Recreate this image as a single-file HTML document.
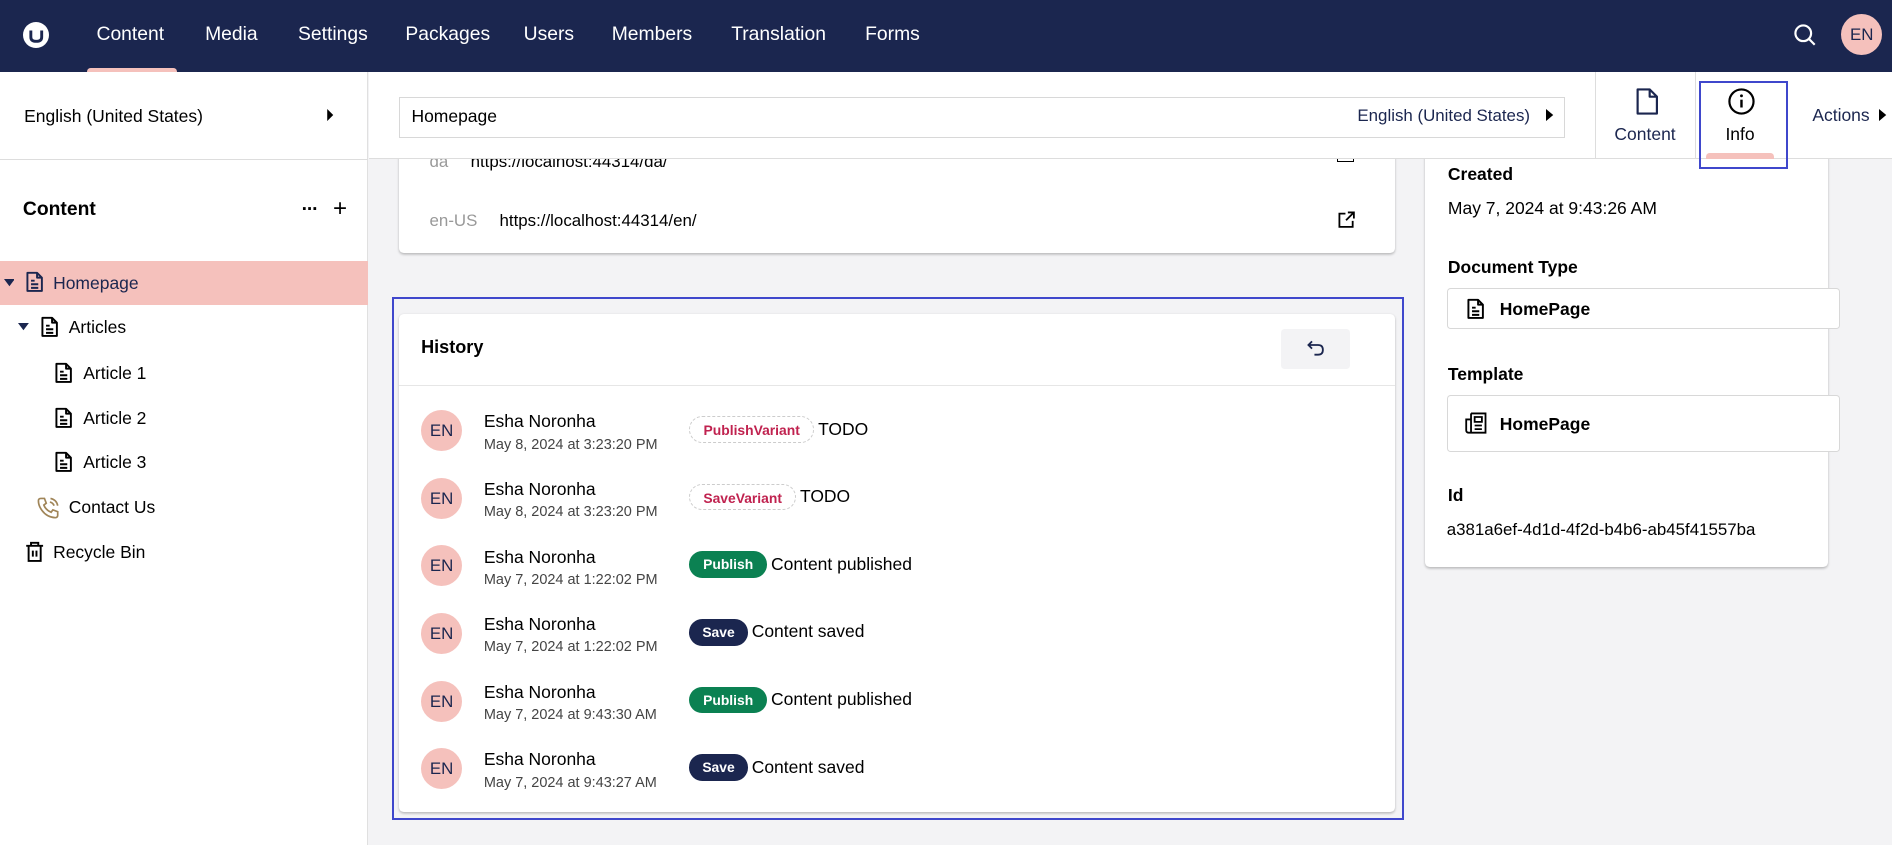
<!DOCTYPE html>
<html><head><meta charset="utf-8">
<style>
*{box-sizing:border-box;margin:0;padding:0}
html,body{width:1892px;height:845px;overflow:hidden;background:#f3f3f5}
body{font-family:"Liberation Sans",sans-serif;color:#1b264f}
#w{zoom:1.2066;width:1568px;height:701px;position:relative;background:#f3f3f5;overflow:hidden}
.a{position:absolute}
.hdr{left:0;top:0;width:1568px;height:60px;background:#1b264f}
.nav{top:20px;color:#fff;font-size:16px}
.t{white-space:nowrap}
.bold{font-weight:bold}
.card{background:#fff;border-radius:4px;box-shadow:0 1px 2px rgba(0,0,0,.25)}
.tree{font-size:14.5px;color:#1b264f}
.av{width:34px;height:34px;border-radius:50%;background:#f5c1bc;color:#1b264f;font-size:14px;text-align:center;line-height:34px}
.nm{font-size:14.5px;color:#000}
.dt{font-size:12px;color:#444}
.bdg{height:22px;border-radius:11px;font-size:11.5px;font-weight:bold;line-height:22px;text-align:center;color:#fff}
.msg{font-size:14.5px;color:#000}
</style></head><body><div id="w">
<div class="a hdr"></div>
<div class="a" style="left:19px;top:18px;width:22px;height:22px;border-radius:50%;background:#fff"></div>
<svg class="a" style="left:19px;top:18px" width="22" height="22" viewBox="0 0 22 22"><path d="M6.5 7 V12.5 Q6.5 16 11 16 Q15.5 16 15.5 12.5 V7" fill="none" stroke="#1b264f" stroke-width="2.4"/></svg>
<div class="a nav t" style="left:80px">Content</div>
<div class="a nav t" style="left:170px">Media</div>
<div class="a nav t" style="left:247px">Settings</div>
<div class="a nav t" style="left:336px">Packages</div>
<div class="a nav t" style="left:434px">Users</div>
<div class="a nav t" style="left:507px">Members</div>
<div class="a nav t" style="left:606px">Translation</div>
<div class="a nav t" style="left:717px">Forms</div>
<div class="a" style="left:72px;top:56px;width:75px;height:4px;background:#f5c1bc;border-radius:3px 3px 0 0"></div>
<svg class="a" style="left:1486px;top:19px" width="20" height="20" viewBox="0 0 20 20"><circle cx="8.5" cy="8.5" r="6.5" fill="none" stroke="#fff" stroke-width="1.8"/><path d="M13.5 13.5 L18 18" stroke="#fff" stroke-width="1.8"/></svg>
<div class="a av" style="left:1526px;top:12px;font-size:14px">EN</div>

<!-- sidebar -->
<div class="a" style="left:0;top:60px;width:305px;height:641px;background:#fff;border-right:1px solid #e0e0e0"></div>
<div class="a" style="left:0;top:132px;width:305px;height:1px;background:#ddd"></div>
<div class="a t" style="left:20px;top:88px;font-size:14.5px;color:#000">English (United States)</div>
<svg class="a" style="left:270px;top:90px" width="8" height="10"><path d="M1 0 L6 5 L1 10Z" fill="#000"/></svg>
<div class="a t bold" style="left:19px;top:165px;font-size:16px;color:#000">Content</div>
<div class="a t bold" style="left:250px;top:165px;font-size:16px;color:#000;letter-spacing:-1px">···</div>
<div class="a t" style="left:276px;top:162px;font-size:20px;color:#000">+</div>
<div class="a" style="left:0;top:216px;width:305px;height:37px;background:#f5c1bc"></div>
<svg width="0" height="0" style="position:absolute"><defs><symbol id="doc" viewBox="0 0 16 18"><path d="M2 1.5 H10 L14 5.5 V16.5 H2 Z M10 1.5 V5.5 H14 M5 8 H8 M5 11 H11 M5 14 H11" fill="none" stroke="currentColor" stroke-width="1.6" stroke-linejoin="round"/></symbol></defs></svg>
<svg class="a" style="left:3px;top:231px" width="9" height="7"><path d="M0 0 H9 L4.5 6Z" fill="#1b264f"/></svg>
<svg class="a" style="left:21px;top:225px;color:#1b264f" width="16" height="18"><use href="#doc"/></svg>
<div class="a t tree" style="left:44px;top:226px">Homepage</div>
<svg class="a" style="left:15px;top:268px" width="9" height="7"><path d="M0 0 H9 L4.5 6Z" fill="#1b264f"/></svg>
<svg class="a" style="left:33px;top:262px;color:#000" width="16" height="18"><use href="#doc"/></svg>
<div class="a t tree" style="left:57px;top:263px;color:#000">Articles</div>
<svg class="a" style="left:45px;top:300px;color:#000" width="16" height="18"><use href="#doc"/></svg>
<div class="a t tree" style="left:69px;top:301px;color:#000">Article 1</div>
<svg class="a" style="left:45px;top:337px;color:#000" width="16" height="18"><use href="#doc"/></svg>
<div class="a t tree" style="left:69px;top:338px;color:#000">Article 2</div>
<svg class="a" style="left:45px;top:374px;color:#000" width="16" height="18"><use href="#doc"/></svg>
<div class="a t tree" style="left:69px;top:375px;color:#000">Article 3</div>
<svg class="a" style="left:30px;top:411px" width="20" height="20" viewBox="0 0 20 20"><path d="M4 2 L7 2 L8.5 6 L6.5 7.5 Q8 11.5 12.5 13.5 L14 11.5 L18 13 V16 Q18 18 16 18 Q9 17.5 5 12 Q2 8 2 4 Q2 2 4 2Z M12 2 Q17 3 18 8 M11.5 5 Q14 5.5 15 8" fill="none" stroke="#a08558" stroke-width="1.4"/></svg>
<div class="a t tree" style="left:57px;top:412px;color:#000">Contact Us</div>
<svg class="a" style="left:21px;top:448px" width="16" height="18" viewBox="0 0 16 18"><path d="M1 4 H15 M5 4 V1.5 H11 V4 M3 4 V16.5 H13 V4 M6.5 8 V13 M9.5 8 V13" fill="none" stroke="#000" stroke-width="1.6"/></svg>
<div class="a t tree" style="left:44px;top:449px;color:#000">Recycle Bin</div>

<!-- cards in main -->
<div class="a card" style="left:331px;top:110px;width:825px;height:100px"></div>
<div class="a t" style="left:356px;top:126px;font-size:14px;color:#999">da</div>
<div class="a t" style="left:390px;top:126px;font-size:14px;color:#000">https://localhost:44314/da/</div>
<div class="a t" style="left:356px;top:175px;font-size:14px;color:#999">en-US</div>
<div class="a t" style="left:414px;top:175px;font-size:14px;color:#000">https://localhost:44314/en/</div>
<svg class="a" style="left:1108px;top:174px" width="16" height="16" viewBox="0 0 16 16"><path d="M7 3 H2 V14 H13 V9 M9 2 H14 V7 M14 2 L7.5 8.5" fill="none" stroke="#000" stroke-width="1.5"/></svg>
<div class="a" style="left:1108px;top:126px;width:14px;height:8px;border:1.5px solid #000;border-top:none"></div>

<!-- right info card -->
<div class="a card" style="left:1181px;top:110px;width:334px;height:360px"></div>
<div class="a t bold" style="left:1200px;top:136px;font-size:14.5px;color:#000">Created</div>
<div class="a t" style="left:1200px;top:164px;font-size:14.5px;color:#000">May 7, 2024 at 9:43:26 AM</div>
<div class="a t bold" style="left:1200px;top:213px;font-size:14.5px;color:#000">Document Type</div>
<div class="a" style="left:1199px;top:239px;width:326px;height:34px;border:1px solid #d8d8d8;border-radius:3px;background:#fff"></div>
<svg class="a" style="left:1215px;top:247px;color:#000" width="16" height="18"><use href="#doc"/></svg>
<div class="a t bold" style="left:1243px;top:248px;font-size:14.5px;color:#000">HomePage</div>
<div class="a t bold" style="left:1200px;top:302px;font-size:14.5px;color:#000">Template</div>
<div class="a" style="left:1199px;top:327px;width:326px;height:48px;border:1px solid #d8d8d8;border-radius:3px;background:#fff"></div>
<svg class="a" style="left:1214px;top:341px" width="19" height="20" viewBox="0 0 19 20"><path d="M5 2 H17 V18 H3 Q1 18 1 16 V7 H5 M5 2 V18 M8 5 H14 V9 H8Z M8 12 H14 M8 15 H14" fill="none" stroke="#000" stroke-width="1.5"/></svg>
<div class="a t bold" style="left:1243px;top:343px;font-size:14.5px;color:#000">HomePage</div>
<div class="a t bold" style="left:1200px;top:402px;font-size:14.5px;color:#000">Id</div>
<div class="a t" style="left:1199px;top:431px;font-size:14px;color:#000">a381a6ef-4d1d-4f2d-b4b6-ab45f41557ba</div>

<!-- top bar -->
<div class="a" style="left:306px;top:60px;width:1262px;height:72px;background:#fff;border-bottom:1px solid #ddd"></div>
<div class="a" style="left:331px;top:80px;width:966px;height:34px;border:1px solid #d8d8d8;background:#fff"></div>
<div class="a t" style="left:341px;top:88px;font-size:14.5px;color:#000">Homepage</div>
<div class="a t" style="left:1125px;top:88px;font-size:14px;color:#1b264f">English (United States)</div>
<svg class="a" style="left:1281px;top:90px" width="7" height="10"><path d="M0 0 L6 5 L0 10Z" fill="#000"/></svg>
<div class="a" style="left:1322px;top:60px;width:1px;height:72px;background:#ddd"></div>
<div class="a" style="left:1405px;top:60px;width:1px;height:72px;background:#ddd"></div>
<svg class="a" style="left:1354px;top:72px" width="22" height="24" viewBox="0 0 22 24"><path d="M3 2 H13 L19 8 V22 H3Z M13 2 V8 H19" fill="none" stroke="#1b264f" stroke-width="1.8" stroke-linejoin="round"/></svg>
<div class="a t" style="left:1338px;top:103px;font-size:14.5px;color:#1b264f">Content</div>
<svg class="a" style="left:1431px;top:72px" width="24" height="24" viewBox="0 0 24 24"><circle cx="12" cy="12" r="10" fill="none" stroke="#000" stroke-width="1.8"/><path d="M12 10.5 V17" stroke="#000" stroke-width="2"/><circle cx="12" cy="7.3" r="1.2" fill="#000"/></svg>
<div class="a t" style="left:1430px;top:103px;font-size:14.5px;color:#000">Info</div>
<div class="a" style="left:1414px;top:127px;width:56px;height:5px;background:#f5c1bc;border-radius:3px 3px 0 0"></div>
<div class="a" style="left:1408px;top:67px;width:74px;height:73px;border:2px solid #3f47cc"></div>
<div class="a t" style="left:1502px;top:87px;font-size:14.5px;color:#1b264f">Actions</div>
<svg class="a" style="left:1557px;top:90px" width="7" height="10"><path d="M0 0 L6 5 L0 10Z" fill="#000"/></svg>

<!-- history -->
<div class="a" style="left:325px;top:246px;width:839px;height:434px;border:2px solid #3f47cc"></div>
<div class="a card" style="left:331px;top:260px;width:825px;height:413px"></div>
<div class="a t bold" style="left:349px;top:279px;font-size:15px;color:#000">History</div>
<div class="a" style="left:1062px;top:273px;width:57px;height:33px;background:#f3f3f5;border-radius:3px"></div>
<svg class="a" style="left:1082px;top:281px" width="16" height="16" viewBox="0 0 16 16"><path d="M5 2 L2 5 L5 8 M2 5 H10 Q14 5 14 9 Q14 13 10 13 H7" fill="none" stroke="#1b264f" stroke-width="1.5"/></svg>
<div class="a" style="left:331px;top:319px;width:825px;height:1px;background:#e6e6e6"></div>

<div class="a av" style="left:349px;top:340px">EN</div>
<div class="a t nm" style="left:401px;top:341px">Esha Noronha</div>
<div class="a t dt" style="left:401px;top:362px">May 8, 2024 at 3:23:20 PM</div>
<div class="a bdg" style="left:571px;top:345px;width:104px;border:1px dashed #ccc;color:#c0224f;background:#fff">PublishVariant</div>
<div class="a t msg" style="left:678px;top:347px">TODO</div>

<div class="a av" style="left:349px;top:396px">EN</div>
<div class="a t nm" style="left:401px;top:397px">Esha Noronha</div>
<div class="a t dt" style="left:401px;top:418px">May 8, 2024 at 3:23:20 PM</div>
<div class="a bdg" style="left:571px;top:401px;width:89px;border:1px dashed #ccc;color:#c0224f;background:#fff">SaveVariant</div>
<div class="a t msg" style="left:663px;top:403px">TODO</div>

<div class="a av" style="left:349px;top:452px">EN</div>
<div class="a t nm" style="left:401px;top:453px">Esha Noronha</div>
<div class="a t dt" style="left:401px;top:474px">May 7, 2024 at 1:22:02 PM</div>
<div class="a bdg" style="left:571px;top:457px;width:65px;background:#0b8152">Publish</div>
<div class="a t msg" style="left:639px;top:459px">Content published</div>

<div class="a av" style="left:349px;top:508px">EN</div>
<div class="a t nm" style="left:401px;top:509px">Esha Noronha</div>
<div class="a t dt" style="left:401px;top:530px">May 7, 2024 at 1:22:02 PM</div>
<div class="a bdg" style="left:571px;top:513px;width:49px;background:#1b264f">Save</div>
<div class="a t msg" style="left:623px;top:515px">Content saved</div>

<div class="a av" style="left:349px;top:564px">EN</div>
<div class="a t nm" style="left:401px;top:565px">Esha Noronha</div>
<div class="a t dt" style="left:401px;top:586px">May 7, 2024 at 9:43:30 AM</div>
<div class="a bdg" style="left:571px;top:569px;width:65px;background:#0b8152">Publish</div>
<div class="a t msg" style="left:639px;top:571px">Content published</div>

<div class="a av" style="left:349px;top:620px">EN</div>
<div class="a t nm" style="left:401px;top:621px">Esha Noronha</div>
<div class="a t dt" style="left:401px;top:642px">May 7, 2024 at 9:43:27 AM</div>
<div class="a bdg" style="left:571px;top:625px;width:49px;background:#1b264f">Save</div>
<div class="a t msg" style="left:623px;top:627px">Content saved</div>
</div></body></html>
